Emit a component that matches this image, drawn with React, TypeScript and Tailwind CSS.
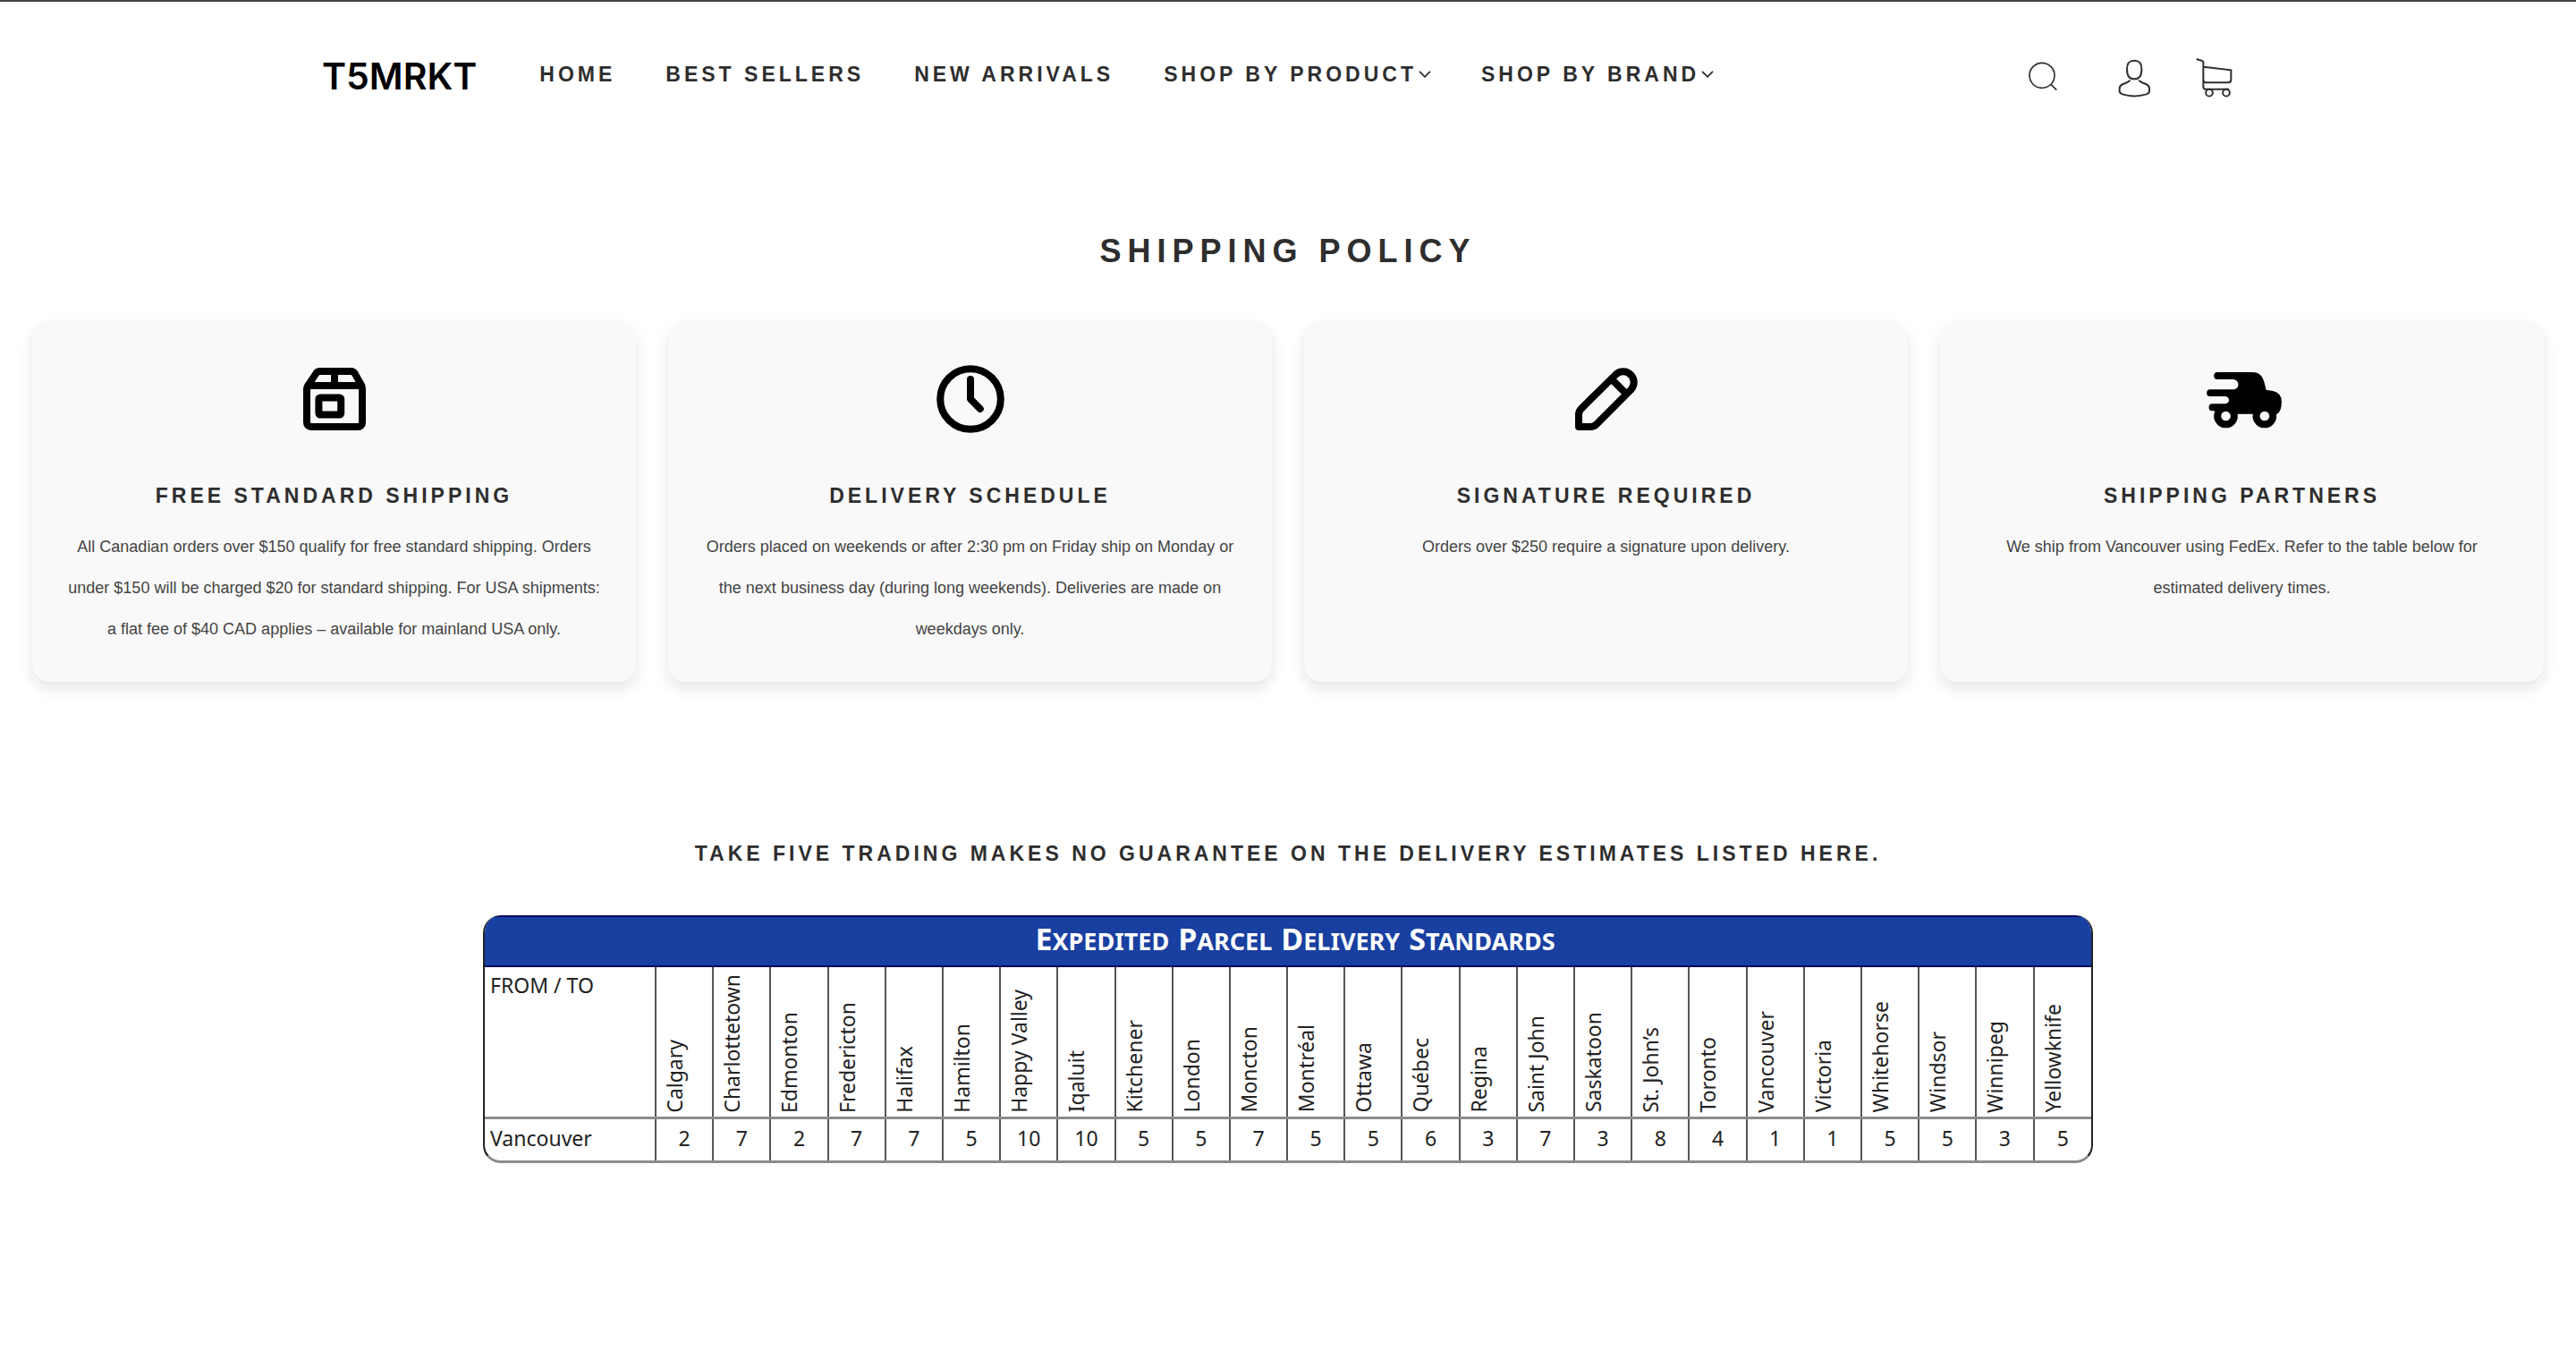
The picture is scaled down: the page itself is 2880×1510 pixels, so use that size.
import React from "react";

const navItems = [
  { label: "HOME", menu: false },
  { label: "BEST SELLERS", menu: false },
  { label: "NEW ARRIVALS", menu: false },
  { label: "SHOP BY PRODUCT", menu: true },
  { label: "SHOP BY BRAND", menu: true },
];

const standards: [string, number][] = [
  ["Calgary", 2],
  ["Charlottetown", 7],
  ["Edmonton", 2],
  ["Fredericton", 7],
  ["Halifax", 7],
  ["Hamilton", 5],
  ["Happy Valley", 10],
  ["Iqaluit", 10],
  ["Kitchener", 5],
  ["London", 5],
  ["Moncton", 7],
  ["Montréal", 5],
  ["Ottawa", 5],
  ["Québec", 6],
  ["Regina", 3],
  ["Saint John", 7],
  ["Saskatoon", 3],
  ["St. John’s", 8],
  ["Toronto", 4],
  ["Vancouver", 1],
  ["Victoria", 1],
  ["Whitehorse", 5],
  ["Windsor", 5],
  ["Winnipeg", 3],
  ["Yellowknife", 5],
];

const line = {
  fill: "none",
  stroke: "currentColor",
  strokeWidth: 2,
  strokeLinecap: "round" as const,
  strokeLinejoin: "round" as const,
};

function BoxIcon() {
  return (
    <svg viewBox="0 0 24 24" className="size-24" aria-hidden="true" {...line}>
      <path d="M4.25 9.2v9.3c0 .8.5 1.25 1.25 1.25h13c.8 0 1.25-.5 1.25-1.25V9.2c0-.5-.1-.9-.35-1.3l-1.7-3a1.3 1.3 0 0 0-1.15-.65h-8.6c-.5 0-.9.25-1.15.65l-2 3c-.25.4-.55.8-.55 1.3Z" />
      <path d="M4.6 8.25h14.8M12 4.5v3.7" />
      <rect x="7.6" y="11.6" width="6.2" height="4.8" rx="0.4" />
    </svg>
  );
}

function ClockIcon() {
  return (
    <svg viewBox="0 0 24 24" className="size-24" aria-hidden="true" {...line}>
      <circle cx="12" cy="12" r="8.45" />
      <path d="M12 6.5V12l2.7 2.75" />
    </svg>
  );
}

function PencilIcon() {
  return (
    <svg viewBox="0 0 24 24" className="size-24" aria-hidden="true" {...line}>
      <path d="M4.25 19.75v-3.4c0-.7.25-1.2.7-1.65l9.68-9.57a3 3 0 0 1 4.24 4.24L9.3 18.95c-.5.5-1 .8-1.7.8H4.25Z" />
      <path d="m13.4 6.4 4.2 4.2" strokeLinecap="butt" />
    </svg>
  );
}

function TruckIcon() {
  return (
    <svg viewBox="55.5 27 288 288" className="size-24" fill="currentColor" aria-hidden="true">
      <path d="M116 81H234c22 0 33 14 38 31q4 13 7 28l23 4q29 6 29 36 0 32-15 41H116V211H99a12 12 0 0 1 0-24h43a12.500 12.500 0 0 0 0-25H91.500a11.500 11.500 0 0 1 0-23H169a17 17 0 0 0 0-34H116a12 12 0 0 1 0-24Z" />
      <circle cx="144" cy="228" r="40" />
      <circle cx="274" cy="228" r="40" />
      <circle cx="144" cy="228" r="16" fill="#f9f9f9" />
      <circle cx="274" cy="228" r="16" fill="#f9f9f9" />
    </svg>
  );
}

const cards = [
  {
    icon: <BoxIcon />,
    title: "FREE STANDARD SHIPPING",
    text: "All Canadian orders over $150 qualify for free standard shipping. Orders under $150 will be charged $20 for standard shipping. For USA shipments: a flat fee of $40 CAD applies – available for mainland USA only.",
  },
  {
    icon: <ClockIcon />,
    title: "DELIVERY SCHEDULE",
    text: "Orders placed on weekends or after 2:30 pm on Friday ship on Monday or the next business day (during long weekends). Deliveries are made on weekdays only.",
  },
  {
    icon: <PencilIcon />,
    title: "SIGNATURE REQUIRED",
    text: "Orders over $250 require a signature upon delivery.",
  },
  {
    icon: <TruckIcon />,
    title: "SHIPPING PARTNERS",
    text: "We ship from Vancouver using FedEx. Refer to the table below for estimated delivery times.",
  },
];

function Header() {
  return (
    <header className="border-t-2 border-[#444]">
      <div className="mx-auto flex h-[166px] w-full max-w-[2160px] items-center">
        <a href="#" className="mr-[70px] font-['Inter'] text-[41px] leading-none font-semibold text-black">
          T5MRKT
        </a>
        <nav aria-label="Main" className="flex items-center gap-14 pb-1">
          {navItems.map((item) => {
            const style = "flex items-center text-[23px] leading-8 font-bold tracking-[4px] whitespace-nowrap";
            return item.menu ? (
              <button key={item.label} type="button" className={style}>
                {item.label}
                <svg viewBox="0 0 14 8" className="ml-0.5 h-2 w-3.5" fill="none" stroke="currentColor" strokeWidth="1.8" aria-hidden="true">
                  <path d="m1 .8 6 6 6-6" />
                </svg>
              </button>
            ) : (
              <a key={item.label} href="#" className={style}>
                {item.label}
              </a>
            );
          })}
        </nav>
        <div className="mr-5 ml-auto flex items-center gap-12">
          <button type="button" aria-label="Search">
            <svg viewBox="121 60 144 144" className="size-12" fill="none" stroke="currentColor" strokeWidth="5" aria-hidden="true">
              <circle cx="190" cy="130" r="42" />
              <path d="m220 160 19 19" />
            </svg>
          </button>
          <button type="button" aria-label="Account">
            <svg viewBox="409 60 144 144" className="size-12" fill="none" stroke="currentColor" strokeWidth="6" strokeLinecap="round" aria-hidden="true">
              <path d="M475 110c0-20 6-30 24.500-30S524 90 524 110s-7 32-24.500 32S475 130 475 110Z" />
              <path d="M484 148c-7 6-15 8-23 11-8 4-11 8-11 15v9c0 6 4 8 10 10 25 8 54 8 80 0 6-2 10-4 10-10v-9c0-7-3-11-11-15-8-3-16-5-23-11" />
            </svg>
          </button>
          <button type="button" aria-label="Cart">
            <svg viewBox="695 62 144 144" className="size-12" fill="none" stroke="currentColor" strokeWidth="6" aria-hidden="true">
              <path d="m706 77 19 6q4 1 4 5v82q0 8 8 8h78" />
              <path d="m730 103 92 11v32q0 10-10 10h-74q-8 0-8-7" />
              <circle cx="749" cy="190" r="11.500" />
              <circle cx="806" cy="190" r="11.500" />
            </svg>
          </button>
        </div>
      </div>
    </header>
  );
}

function StandardsTable() {
  return (
    <div className="mx-auto w-full max-w-[1800px] overflow-hidden rounded-[20px] border-x-2 border-b-3 border-[#8c8c8c] border-x-[#222]">
      <table className="w-full table-fixed border-collapse font-['Noto_Sans',sans-serif] text-[23px] leading-8 text-[#222]">
        <colgroup>
          <col className="w-[191px]" />
        </colgroup>
        <thead>
          <tr className="h-14 bg-[#193fa0] text-white">
            <th colSpan={26} className="h-14 border-y-2 border-[#05055a] p-0 pl-4 text-center">
              <span className="flex items-baseline justify-center gap-2.5 pb-1 text-[27px] leading-9 font-bold uppercase">
                {["Expedited", "Parcel", "Delivery", "Standards"].map((word) => (
                  <span key={word} className="inline-block first-letter:text-[34px]">
                    {word}
                  </span>
                ))}
              </span>
            </th>
          </tr>
          <tr className="h-[169px] border-b-3 border-[#8c8c8c]">
            <th scope="col" className="pt-1 pl-1.5 text-left align-top font-normal">
              FROM / TO
            </th>
            {standards.map(([city]) => (
              <th key={city} scope="col" className="border-l-2 border-[#555] pb-1 pl-1 align-bottom font-normal">
                <span className="block rotate-180 whitespace-nowrap [writing-mode:vertical-rl]">{city}</span>
              </th>
            ))}
          </tr>
        </thead>
        <tbody>
          <tr className="h-12">
            <th scope="row" className="pb-1 pl-1.5 text-left font-normal">
              Vancouver
            </th>
            {standards.map(([city, days]) => (
              <td key={city} className="border-l-2 border-[#555] pb-1 text-center">
                {days}
              </td>
            ))}
          </tr>
        </tbody>
      </table>
    </div>
  );
}

export default function App() {
  return (
    <div className="min-h-screen bg-white font-['Liberation_Sans',Arial,sans-serif] text-[#2e2e2e]">
      <Header />
      <main className="px-9 pb-24">
        <h1 className="pt-[86px] text-center text-4xl leading-[54px] font-bold tracking-[7px]">SHIPPING POLICY</h1>
        <section className="mt-[50px] grid grid-cols-4 gap-9">
          {cards.map((card) => (
            <article
              key={card.title}
              className="flex flex-col items-center rounded-[20px] bg-[#f9f9f9] px-9 pt-10 pb-9 text-center shadow-[0_8px_16px_rgba(0,0,0,0.1)]"
            >
              <div className="text-black">{card.icon}</div>
              <h2 className="mt-11 text-[23px] leading-8 font-bold tracking-[4px]">{card.title}</h2>
              <p className="mt-[18px] text-lg leading-[46px] text-[#444]">{card.text}</p>
            </article>
          ))}
        </section>
        <h2 className="mt-[174px] mb-[51px] text-center text-[23px] leading-9 font-bold tracking-[4px]">
          TAKE FIVE TRADING MAKES NO GUARANTEE ON THE DELIVERY ESTIMATES LISTED HERE.
        </h2>
        <StandardsTable />
      </main>
    </div>
  );
}
